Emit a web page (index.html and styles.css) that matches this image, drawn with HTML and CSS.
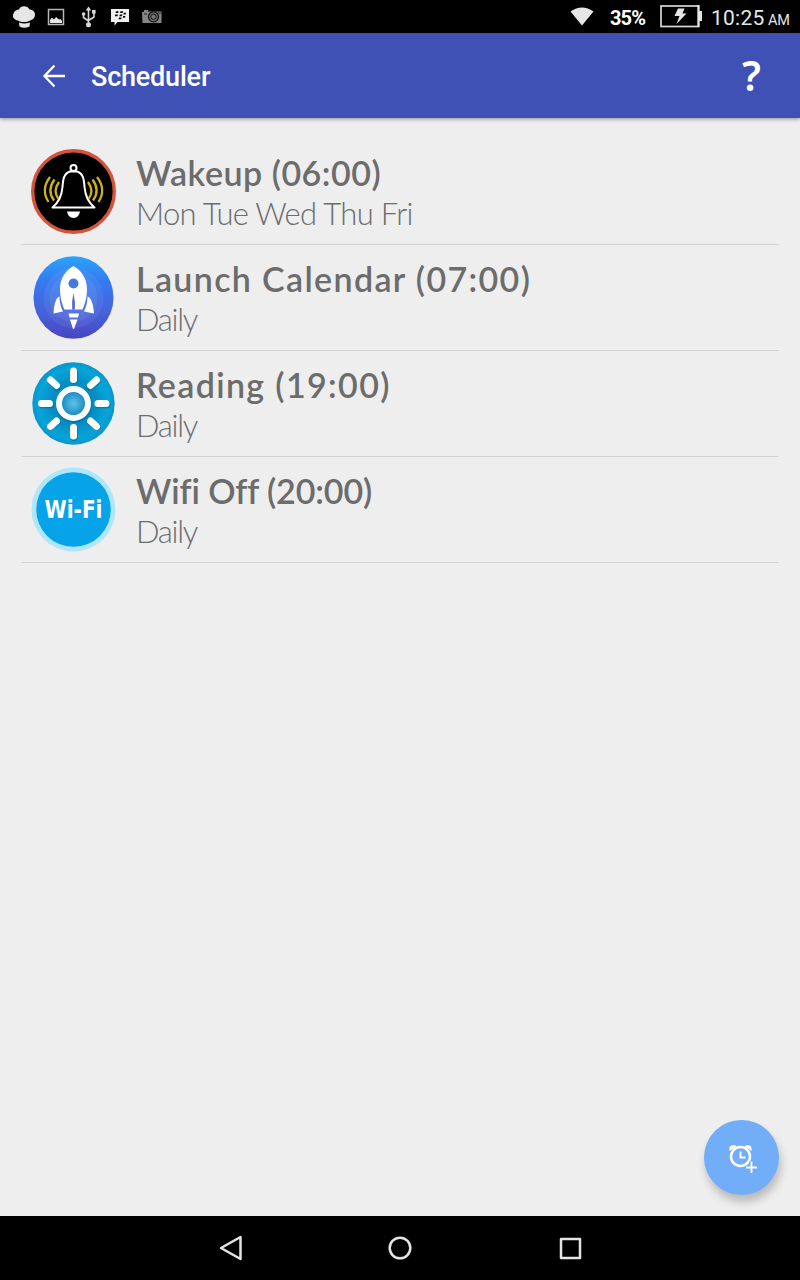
FILE: index.html
```
<!DOCTYPE html>
<html lang="en">
<head>
  <meta charset="UTF-8">
  <meta name="viewport" content="width=device-width, initial-scale=1.0">
  <title>Scheduler</title>
  <link rel="stylesheet" href="styles.css">
</head>
<body>
  <div class="screen">
    <!-- Status bar -->
    <div class="status-bar">
      <svg class="status-icons" width="170" height="33" viewBox="0 0 170 33">
        <path fill="#e6e6e6" d="M18 20.500C13.500 20 12 16.500 13.500 13.500C14.500 10.500 17 9.500 19 9.500C20 5 28 5 29.500 9.500C33 9.500 35 12 35 14.500C35 18 32.500 20 30 20.500C27 22.500 21 22.500 18 20.500ZM19 22.500Q24 24.500 30 22.500L29.500 26.500Q24 29 19.500 26.500Z"/>
        <rect x="48.500" y="9.500" width="15" height="15" fill="none" stroke="#b8b8b8" stroke-width="1.500"/>
        <path fill="#e6e6e6" d="M50 23v-3l2-2.500 2 2 2-2.500 3 2.500 1.500-.5 1.500 2v2z"/>
        <g fill="none" stroke="#d8d8d8" stroke-width="1.600">
          <path d="M88.500 9v15M83.500 14v3.500l5 3.500M94 12v5l-5.500 3.500"/>
        </g>
        <g fill="#d8d8d8">
          <path d="M88.500 6.500l2.800 4h-5.600z"/>
          <circle cx="88.500" cy="24.700" r="2.500"/>
          <circle cx="83.600" cy="14" r="1.800"/>
          <path d="M92 10h3.600v3.600H92z"/>
        </g>
        <path fill="#f0f0f0" d="M111 9h18v13h-11.500l-3 3.500V22H111z"/>
        <path fill="#000" d="M116 11.200h2.600l-.4 1.800h-2.600zM120.500 11.200h2.600l-.4 1.800h-2.600zM115.300 14.400h2.600l-.4 1.800h-2.600zM119.800 14.400h2.600l-.4 1.800h-2.600zM123.800 12.800h2.200l-.4 1.800h-2.200zM119 17.400h2.600l-.4 1.800h-2.600zM123.200 16h2.200l-.4 1.800h-2.200z"/>
        <path fill="#858585" d="M142 12h2v-2h4v1.500h13.500V23H142.500z"/>
        <circle cx="153.500" cy="16.800" r="5" fill="#777" stroke="#111" stroke-width="1.300"/>
        <circle cx="153.500" cy="16.800" r="2.700" fill="#777" stroke="#111"/>
        <path stroke="#222" d="M144 14h3M158 13h3"/>
      </svg>
      <div class="status-right">
        <svg class="signal" width="24" height="19" viewBox="0 0 24 19"><path fill="#e6e6e6" d="M.5 4.500Q12-3.500 23.500 4.500L12 18.500z"/></svg>
        <span class="percent">35%</span>
        <svg class="battery" width="43" height="23" viewBox="0 0 43 23">
          <rect x="1" y="1" width="37.500" height="20.500" fill="none" stroke="#d8d8d8" stroke-width="1.700"/>
          <path fill="#e6e6e6" d="M37.500 0h2v22h-2zM39 6h3v10h-3zM18 3.500h6.500l-2 5h4L16.500 19l3-8h-5z"/>
        </svg>
        <span class="clock">10:25</span><span class="meridiem">AM</span>
      </div>
    </div>

    <!-- Toolbar -->
    <div class="toolbar">
      <svg class="back" width="24" height="24" viewBox="0 0 24 24"><path fill="none" stroke="#fff" stroke-width="2.300" d="M23 12H3M12.500 1.500L2.500 12 12.500 22.500"/></svg>
      <h1>Scheduler</h1>
      <span class="help">?</span>
    </div>

    <!-- Scheduled tasks -->
    <ul class="task-list">
      <li class="task">
        <svg class="task-icon" width="85" height="85" viewBox="0 0 85 85">
          <circle cx="42.500" cy="42.500" r="40.800" fill="#000" stroke="#d5533a" stroke-width="3.400"/>
          <g fill="none" stroke="#fff" stroke-width="2">
            <circle cx="42.500" cy="19" r="3"/>
            <path stroke-linejoin="round" d="M39 22.500C32.500 24.500 32 31 31.500 38C30.500 48 27.500 53 21.500 58.500H63.500C57.500 53 54.500 48 53.500 38C53 31 52.500 24.500 46 22.500Z"/>
          </g>
          <path fill="#fff" d="M36 62.500H49Q48 69 42.500 69Q37 69 36 62.500Z"/>
          <g fill="none" stroke="#ceb018" stroke-width="2.300">
            <path d="M28 33Q21.500 42 27.500 50M23.500 30.500Q15.500 41.500 23 51.500M19 28Q9.500 40.500 17.500 53"/>
            <path d="M57 33Q63.500 42 57.500 50M61.500 30.500Q69.500 41.500 62 51.500M66 28Q75.500 40.500 67.500 53"/>
          </g>
        </svg>
        <div class="task-text">
          <h2 class="wakeup">Wakeup (06:00)</h2>
          <p class="weekdays">Mon Tue Wed Thu Fri</p>
        </div>
      </li>
      <li class="task">
        <svg class="task-icon" width="85" height="85" viewBox="0 0 85 85">
          <defs>
            <linearGradient id="sky" x1="0" y1="0" x2="0" y2="1">
              <stop offset="0" stop-color="#2aa3fc"/>
              <stop offset=".3" stop-color="#347bf0"/>
              <stop offset=".7" stop-color="#4661d9"/>
              <stop offset="1" stop-color="#4945c0"/>
            </linearGradient>
          </defs>
          <ellipse cx="42.500" cy="42.500" rx="40" ry="41.300" fill="url(#sky)"/>
          <circle cx="42.500" cy="43" r="30" fill="#fff" opacity=".06"/>
          <circle cx="42.500" cy="43" r="24" fill="#fff" opacity=".06"/>
          <path fill="#fff" d="M42.500 11C35 15 29 23 29 34C29 43 31.500 50 33.500 54.500H51.500C53.500 50 56 43 56 34C56 23 50 15 42.500 11ZM28.500 41.500C25 42 23 50 22.500 58.500L32 56.500C30 52 28.500 48 28.500 41.500ZM56.500 41.500C60 42 62.500 50 63 58.500L53 56.500C55 52 56.500 48 56.500 41.500ZM37.500 58.500H48L47 62.500H38.500ZM39 64.500H46.500L43 74H42Z"/>
          <circle cx="42.500" cy="28.500" r="5" fill="#4779dd"/>
          <path fill="#4b68d1" d="M42.500 38Q44.500 47 43.800 54.500H41.200Q40.500 46 42.500 38Z"/>
        </svg>
        <div class="task-text">
          <h2 class="calendar">Launch Calendar (07:00)</h2>
          <p>Daily</p>
        </div>
      </li>
      <li class="task">
        <svg class="task-icon" width="85" height="85" viewBox="0 0 85 85">
          <defs>
            <radialGradient id="day">
              <stop offset="0" stop-color="#0586bd"/>
              <stop offset=".55" stop-color="#048fc6"/>
              <stop offset=".85" stop-color="#06a5d9"/>
              <stop offset="1" stop-color="#0796cb"/>
            </radialGradient>
            <radialGradient id="core">
              <stop offset="0" stop-color="#5fc4ec"/>
              <stop offset="1" stop-color="#1585bf"/>
            </radialGradient>
          </defs>
          <circle cx="42.500" cy="42.500" r="41.200" fill="url(#day)"/>
          <g fill="none" stroke="#045983" stroke-opacity=".45" stroke-width="7.500" stroke-linecap="round">
            <circle cx="43" cy="43.500" r="14.500"/>
            <path d="M43 10.500V19.500M43 67.500V76.500M11 43.500H19.500M67.500 43.500H76M20 20L26 26M59 26L66 20M20 66L26 60.500M59 60.500L66 66"/>
          </g>
          <circle cx="42.500" cy="42.500" r="13" fill="url(#core)"/>
          <circle cx="42.500" cy="42.500" r="14.500" fill="none" stroke="#fff" stroke-width="6"/>
          <path fill="none" stroke="#fff" stroke-width="7" stroke-linecap="round" d="M42.500 10V18.500M42.500 66.500V75M10.500 42.500H18.500M67 42.500H75M19.500 19L25.500 24.500M59.500 24.500L65.500 19M19.500 65.500L25.500 60M59.500 60L65.500 65.500"/>
        </svg>
        <div class="task-text">
          <h2 class="reading">Reading (19:00)</h2>
          <p>Daily</p>
        </div>
      </li>
      <li class="task">
        <svg class="task-icon" width="85" height="85" viewBox="0 0 85 85">
          <circle cx="42.500" cy="42.500" r="42" fill="#aee6fa"/>
          <circle cx="42.500" cy="42.500" r="37.300" fill="#06a3e8"/>
          <text class="wifi-label" x="42.500" y="51" text-anchor="middle" textLength="58" lengthAdjust="spacingAndGlyphs">Wi-Fi</text>
        </svg>
        <div class="task-text">
          <h2 class="wifi">Wifi Off (20:00)</h2>
          <p>Daily</p>
        </div>
      </li>
    </ul>

    <button class="add-task" aria-label="Add schedule">
      <svg width="30" height="30" viewBox="0 0 30 30">
        <g fill="none" stroke="#fff">
          <circle cx="13.500" cy="13.500" r="9.500" stroke-width="2.500"/>
          <path stroke-width="2" d="M13.500 8.500V14.500H18.500"/>
          <path stroke="#72aef7" stroke-width="4" d="M24.500 18V30M19 24.500H30"/>
          <path stroke-width="1.800" d="M24.500 18.500V30M19 24.500H30"/>
        </g>
        <path fill="#fff" d="M2.500 8Q1.500 2 6.500 2Q8.500 2 9.500 3.500ZM24.500 8Q25.500 2 20.500 2Q18.500 2 17.500 3.500Z"/>
      </svg>
    </button>

    <!-- Navigation bar -->
    <div class="nav-bar">
      <svg width="28" height="28" viewBox="0 0 28 28"><path d="M24.500 3V25L5 14z"/></svg>
      <svg width="28" height="28" viewBox="0 0 28 28"><circle cx="14" cy="14" r="10.300"/></svg>
      <svg width="28" height="28" viewBox="0 0 28 28"><rect x="5" y="5" width="19" height="19"/></svg>
    </div>
  </div>
</body>
</html>
```
FILE: styles.css
```
* {
  box-sizing: border-box;
}

body {
  margin: 0;
  background-color: #eee;
  font-family: Roboto, sans-serif;
}

.screen {
  display: flex;
  flex-direction: column;
  position: relative;
  width: 800px;
  height: 1280px;
  overflow: hidden;
}

.status-bar {
  display: flex;
  justify-content: space-between;
  flex: none;
  height: 33px;
  background-color: #000;
  color: #e6e6e6;
}

.status-right {
  display: flex;
  align-items: baseline;
  padding-right: 10px;
  line-height: 36px;
}

.signal {
  align-self: flex-start;
  margin: 7px 16px 0 0;
}

.percent {
  width: 50px;
  color: #fff;
  font-size: 20px;
  font-weight: 700;
  letter-spacing: -0.8px;
}

.battery {
  align-self: flex-start;
  margin: 5px 8px 0 0;
}

.clock {
  width: 57px;
  font-size: 21px;
  letter-spacing: 0.3px;
}

.meridiem {
  font-size: 14.5px;
}

.toolbar {
  display: flex;
  align-items: center;
  flex: none;
  height: 85px;
  padding: 0 39px 0 42px;
  background-color: #3f51b5;
  color: #fff;
  box-shadow: 0 1px 4px rgba(0, 0, 0, 0.4);
}

.toolbar h1 {
  flex: 1;
  margin: 2px 0 0 25px;
  font-size: 27px;
  font-weight: 500;
  letter-spacing: -0.2px;
}

.help {
  font-family: "Noto Sans", sans-serif;
  font-size: 41px;
  font-weight: 600;
  line-height: 83px;
}

.task-list {
  flex: 1;
  margin: 0;
  padding: 21px 21px 0;
  list-style: none;
}

.task {
  display: flex;
  height: 106px;
  padding: 10px 0 0 10px;
  border-bottom: 1px solid #d4d4d4;
}

.task-text {
  margin-left: 20px;
  color: #6c6c6c;
  font-family: Lato, sans-serif;
  font-variant-ligatures: none;
  white-space: nowrap;
}

.task-text h2 {
  margin: 2px 0 0;
  font-size: 34px;
  font-weight: 600;
  line-height: 44px;
}

.task-text .wakeup {
  letter-spacing: 0.5px;
}

.task-text .calendar,
.task-text .reading {
  letter-spacing: 1.35px;
}

.task-text .wifi {
  letter-spacing: -0.1px;
}

.task-text p {
  margin: 0;
  font-size: 31px;
  font-weight: 300;
  letter-spacing: -1.3px;
  line-height: 37px;
}

.task-text .weekdays {
  letter-spacing: -0.68px;
}

.wifi-label {
  fill: #fff;
  font-family: "DejaVu Sans", sans-serif;
  font-size: 24px;
  font-weight: 700;
}

.add-task {
  display: flex;
  align-items: center;
  justify-content: center;
  position: absolute;
  right: 21px;
  bottom: 85px;
  width: 75px;
  height: 75px;
  padding: 0;
  border: none;
  border-radius: 50%;
  background-color: #72aef7;
  box-shadow: 2px 7px 8px rgba(0, 0, 0, 0.22);
}

.nav-bar {
  display: flex;
  align-items: center;
  justify-content: center;
  gap: 142px;
  flex: none;
  height: 64px;
  background-color: #000;
}

.nav-bar svg {
  fill: none;
  stroke: #e4e4e4;
  stroke-width: 2.5;
  stroke-linejoin: round;
}
```
